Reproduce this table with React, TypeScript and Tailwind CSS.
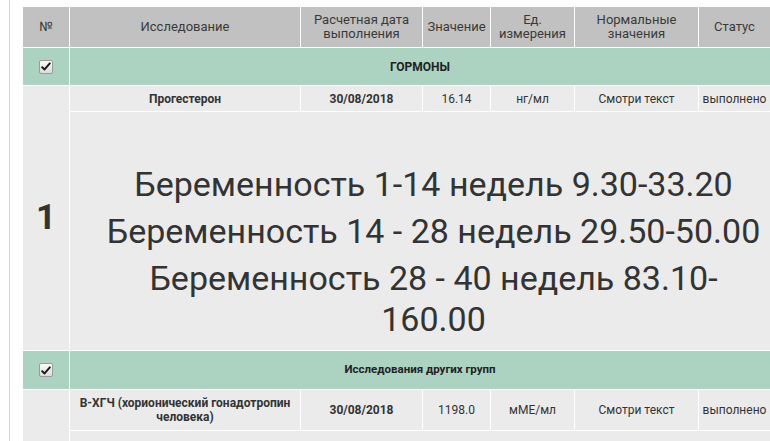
import React from "react";

function Check() {
  return (
    <div className="mx-auto flex h-[14px] w-[14px] items-center justify-center rounded-[2px] border border-[#9a9a9a] bg-gradient-to-b from-[#fbfbfb] to-[#dcdcdc]">
      <svg width="10" height="9" viewBox="0 0 10 9">
        <path d="M1.2 5.2 L3.6 7.4 L8.8 1.4" fill="none" stroke="#1a1a1a" strokeWidth="2" strokeLinecap="round" strokeLinejoin="round" />
      </svg>
    </div>
  );
}

const th = "border border-white bg-[#c1c1c1] px-0 text-[13px] font-normal leading-[14px] text-[#3a3a3a] text-center align-middle";
const td = "border border-white bg-[#ebebeb] px-0 text-[12px] leading-[14px] text-[#333] text-center align-middle";
const bold = " text-[11px] font-bold text-[#222]";
const green = "border border-white bg-[#acd3c2] text-center align-middle";

export default function App() {
  return (
    <div className="min-h-[441px] bg-white pl-[9px]" style={{ fontFamily: "Roboto, sans-serif" }}>
      <div className="min-h-[441px] border-l border-[#d4d4d4] pl-[12px] pt-[6px]">
        <table className="w-[748px] table-fixed border-collapse">
          <colgroup>
            <col className="w-[47px]" />
            <col className="w-[231px]" />
            <col className="w-[122px]" />
            <col className="w-[68px]" />
            <col className="w-[84px]" />
            <col className="w-[124px]" />
            <col className="w-[72px]" />
          </colgroup>
          <thead>
            <tr className="h-[41px]">
              <th className={th}>№</th>
              <th className={th}>Исследование</th>
              <th className={th + " px-2"}>Расчетная дата выполнения</th>
              <th className={th}>Значение</th>
              <th className={th}>Ед. измерения</th>
              <th className={th + " px-4"}>Нормальные значения</th>
              <th className={th}>Статус</th>
            </tr>
          </thead>
          <tbody>
            <tr className="h-[38px]">
              <td className={green}><Check /></td>
              <td colSpan={6} className={green + " text-[12px] font-bold text-[#222]"}>ГОРМОНЫ</td>
            </tr>
            <tr className="h-[26px]">
              <td rowSpan={2} className={td + " text-[35px] font-bold text-[#111]"}>1</td>
              <td className={td + bold}>Прогестерон</td>
              <td className={td + bold}>30/08/2018</td>
              <td className={td}>16.14</td>
              <td className={td}>нг/мл</td>
              <td className={td}>Смотри текст</td>
              <td className={td}>выполнено</td>
            </tr>
            <tr>
              <td colSpan={6} className={td + " pl-[34px] pr-[7px] pt-[52px] pb-[10px] text-[34px] leading-[41px] text-[#111]"}>
                <div className="mb-[6px]">Беременность 1-14 недель 9.30-33.20</div>
                <div className="mb-[6px]">Беременность 14 - 28 недель 29.50-50.00</div>
                <div>Беременность 28 - 40 недель 83.10-160.00</div>
              </td>
            </tr>
            <tr className="h-[39px]">
              <td className={green}><Check /></td>
              <td colSpan={6} className={green + " text-[11.5px] font-bold text-[#222]"}>Исследования других групп</td>
            </tr>
            <tr className="h-[41px]">
              <td rowSpan={2} className={td}></td>
              <td className={td + bold + " px-1"}>В-ХГЧ (хорионический гонадотропин человека)</td>
              <td className={td + bold}>30/08/2018</td>
              <td className={td}>1198.0</td>
              <td className={td}>мМЕ/мл</td>
              <td className={td}>Смотри текст</td>
              <td className={td}>выполнено</td>
            </tr>
            <tr className="h-[200px]">
              <td colSpan={6} className={td}></td>
            </tr>
          </tbody>
        </table>
      </div>
    </div>
  );
}
